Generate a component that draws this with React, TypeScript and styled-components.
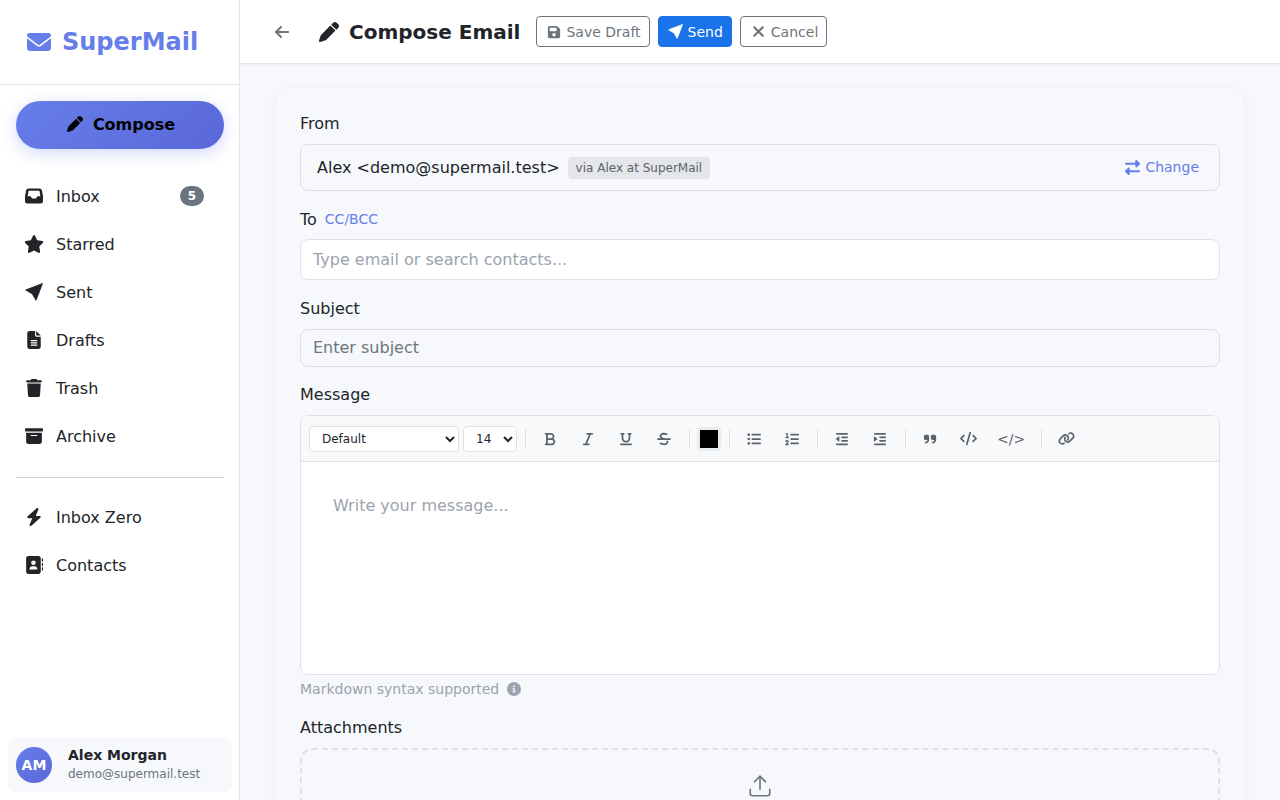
import React from 'react'
import styled, { createGlobalStyle } from 'styled-components'
import {
  FaAddressBook, FaArrowLeft, FaBold, FaBolt, FaBoxArchive, FaCircleInfo, FaCode, FaEnvelope,
  FaFileLines, FaFloppyDisk, FaIndent, FaItalic, FaLink, FaListOl, FaListUl, FaOutdent,
  FaPen, FaQuoteRight, FaRightLeft, FaStar, FaStrikethrough, FaTrash, FaUnderline, FaXmark,
} from 'react-icons/fa6'
import { Upload } from 'lucide-react'

const GlobalStyles = createGlobalStyle`
  html, body, #root {
    margin: 0;
    height: 100%;
    overflow: hidden;
  }
  body {
    font-family: "DejaVu Sans", sans-serif;
    color: #212529;
    background: #f6f8fc;
  }
  * { box-sizing: border-box; }
`

const AppContainer = styled.div`
  display: flex;
  width: 1280px;
  height: 800px;
`

const Sidebar = styled.aside`
  width: 240px;
  flex-shrink: 0;
  display: flex;
  flex-direction: column;
  background: #fff;
  box-shadow: inset -1px 0 0 #e3e5e8;
`

const Brand = styled.div`
  height: 85px;
  display: flex;
  align-items: center;
  gap: 11px;
  padding-left: 27px;
  border-bottom: 1px solid #e3e5e8;
  color: #667eea;
  font-size: 24px;
  font-weight: 700;
`

const ComposeButton = styled.button`
  margin: 16px 16px 23px;
  height: 48px;
  display: flex;
  align-items: center;
  justify-content: center;
  gap: 10px;
  padding: 0 0 2px 2px;
  border: 0;
  border-radius: 24px;
  background: linear-gradient(135deg, #667eea, #5a67d8);
  box-shadow: 0 4px 15px rgba(102, 126, 234, 0.3);
  color: #000;
  font-family: inherit;
  font-size: 16px;
  font-weight: 700;
`

const NavList = styled.nav`
  display: flex;
  flex-direction: column;
  padding: 0 8px;
`

const NavItem = styled.div`
  height: 48px;
  display: flex;
  align-items: center;
  gap: 12px;
  padding: 0 28px 0 16px;
  font-size: 16px;
  color: #212529;
`

const NavIcon = styled.span`
  width: 20px;
  display: flex;
  justify-content: center;
  font-size: 18px;
`

const Badge = styled.span`
  margin-left: auto;
  min-width: 24px;
  height: 20px;
  display: flex;
  align-items: center;
  justify-content: center;
  border-radius: 10px;
  background: #6c757d;
  color: #fff;
  font-size: 12px;
  font-weight: 700;
`

const NavDivider = styled.hr`
  margin: 17px 16px 15px;
  border: 0;
  border-top: 1px solid #cfd2d5;
`

const UserCard = styled.div`
  margin: auto 8px 8px;
  height: 54px;
  display: flex;
  align-items: center;
  gap: 16px;
  padding: 0 8px;
  border-radius: 8px;
  background: #f7f8fc;
`

const Avatar = styled.div`
  width: 36px;
  height: 36px;
  display: flex;
  align-items: center;
  justify-content: center;
  border-radius: 50%;
  background: linear-gradient(135deg, #667eea, #5a67d8);
  color: #fff;
  font-size: 14px;
  font-weight: 700;
`

const UserName = styled.div`
  font-size: 14px;
  font-weight: 700;
  line-height: 19px;
`

const UserEmail = styled.div`
  font-size: 12px;
  line-height: 19px;
  color: #6c757d;
`

const Main = styled.main`
  flex: 1;
  min-width: 0;
  display: flex;
  flex-direction: column;
`

const TopBar = styled.header`
  height: 64px;
  flex-shrink: 0;
  display: flex;
  align-items: center;
  padding: 0 34px;
  background: #fff;
  border-bottom: 1px solid #e3e5e8;
  box-shadow: 0 1px 3px rgba(0, 0, 0, 0.05);
`

const BackButton = styled.span`
  display: flex;
  margin-right: 29px;
  color: #6c757d;
`

const Title = styled.h1`
  margin: 0 16px 0 0;
  display: flex;
  align-items: center;
  gap: 10px;
  font-size: 20px;
  line-height: 24px;
  font-weight: 700;
  color: #212529;
`

const ActionButton = styled.button<{ $primary?: boolean }>`
  height: 31px;
  margin-right: 8px;
  display: flex;
  align-items: center;
  gap: 3.5px;
  padding: 0 8px;
  border: 1px solid ${p => (p.$primary ? '#1a73e8' : '#6c757d')};
  border-radius: 4px;
  background: ${p => (p.$primary ? '#1a73e8' : 'transparent')};
  color: ${p => (p.$primary ? '#fff' : '#6c757d')};
  font-family: inherit;
  font-size: 14px;
`

const ButtonIcon = styled.span<{ $width?: number }>`
  width: ${p => p.$width ?? 17.5}px;
  display: flex;
  justify-content: center;
`

const Content = styled.div`
  flex: 1;
  min-height: 0;
  overflow: hidden;
  padding: 24px 36px;
`

const Card = styled.section`
  padding: 24px;
  border-radius: 16px;
  background: #f6f8fc;
  box-shadow: 0 2px 12px rgba(0, 0, 0, 0.05);
`

const FieldLabel = styled.label`
  display: block;
  margin-bottom: 8px;
  font-size: 16px;
  line-height: 24px;
  color: #212529;
`

const ToLabelRow = styled.div`
  display: flex;
  align-items: center;
  gap: 8px;
  margin: 16px 0 8px;
  height: 24px;
  font-size: 16px;
`

const CcLink = styled.span`
  color: #667eea;
  font-size: 14px;
`

const FromBox = styled.div`
  height: 47px;
  display: flex;
  align-items: center;
  padding: 0 20px 0 16px;
  border: 1px solid #dee2e6;
  border-radius: 8px;
  font-size: 16px;
`

const ViaTag = styled.span`
  margin-left: 8px;
  padding: 0 8px;
  height: 22px;
  display: flex;
  align-items: center;
  border-radius: 4px;
  background: #e4e6e9;
  color: #5c636a;
  font-size: 12px;
`

const ChangeLink = styled.span`
  margin-left: auto;
  display: flex;
  align-items: center;
  gap: 5px;
  padding-bottom: 1px;
  color: #667eea;
  font-size: 14px;
`

const TextInput = styled.input<{ $plain?: boolean }>`
  display: block;
  width: 100%;
  height: ${p => (p.$plain ? '38px' : '41px')};
  margin-bottom: ${p => (p.$plain ? '16px' : '17px')};
  padding: ${p => (p.$plain ? '0 12px 2px' : '0 12px')};
  border: 1px solid #dee2e6;
  border-radius: 8px;
  background: ${p => (p.$plain ? 'transparent' : '#fff')};
  font-family: inherit;
  font-size: 16px;
  outline: none;
  &::placeholder {
    color: ${p => (p.$plain ? '#6c757d' : '#9ca3af')};
    opacity: 1;
  }
`

const Editor = styled.div`
  height: 260px;
  display: flex;
  flex-direction: column;
  border: 1px solid #dee2e6;
  border-radius: 8px;
  overflow: hidden;
`

const Toolbar = styled.div`
  height: 46px;
  flex-shrink: 0;
  display: flex;
  align-items: center;
  padding: 0 8px;
  border-bottom: 1px solid #dee2e6;
  background: #f8f9fa;
`

const FontSelect = styled.select<{ $width: number }>`
  width: ${p => p.$width}px;
  height: 26px;
  margin-right: 4px;
  padding: 0 8px;
  border: 1px solid #dee2e6;
  border-radius: 4px;
  background-color: #fff;
  color: #212529;
  font-family: inherit;
  font-size: 12px;
  & + & {
    margin-right: 2px;
  }
`

const ToolDivider = styled.span`
  width: 1px;
  height: 20px;
  margin: 0 5px 0 6px;
  background: #dee2e6;
`

const ToolButton = styled.button`
  min-width: 34px;
  height: 28px;
  margin: 0 2px;
  padding: 0 8px;
  display: flex;
  align-items: center;
  justify-content: center;
  border: 0;
  background: transparent;
  color: #5c636a;
  font-family: inherit;
  font-size: 14px;
`

const ColorInput = styled.input`
  width: 24px;
  height: 24px;
  margin: 0 2px;
  padding: 0;
  border: 0;
  border-radius: 4px;
  background: #e9ecef;
  &::-webkit-color-swatch-wrapper {
    padding: 3px;
  }
  &::-webkit-color-swatch {
    border: 0;
  }
`

const MessageArea = styled.div`
  flex: 1;
  padding: 32px;
  background: #fff;
  color: #9ca3af;
  font-size: 16px;
  line-height: 24px;
`

const HelpText = styled.div`
  display: flex;
  align-items: center;
  gap: 8px;
  margin-top: 4px;
  height: 20px;
  color: #9ca3af;
  font-size: 14px;
`

const AttachLabel = styled(FieldLabel)`
  margin-top: 17px;
  margin-bottom: 8px;
`

const DropZone = styled.div`
  height: 140px;
  display: flex;
  flex-direction: column;
  align-items: center;
  padding-top: 23px;
  border: 2px dashed #dee2e6;
  border-radius: 12px;
  color: #6c757d;
`

const InboxIcon = () => (
  <svg width="18" height="16" viewBox="0 0 18 16" fill="currentColor">
    <path
      fillRule="evenodd"
      d="M3.4.5h11.2a2.4 2.4 0 0 1 2.3 1.8L18 8v5a2.5 2.5 0 0 1-2.5 2.5h-13A2.5 2.5 0 0 1 0 13V8l1.1-5.7A2.4 2.4 0 0 1 3.4.5ZM3.6 2.7h10.8l1 5.5h-3l-1.4 2.2H7L5.6 8.2h-3Z"
    />
  </svg>
)

const SendIcon = ({ size }: { size: number }) => (
  <svg
    width={size}
    height={size}
    viewBox="0 0 16 16"
    fill="currentColor"
    stroke="currentColor"
    strokeWidth="0.8"
    strokeLinejoin="round"
  >
    <path d="M15.5.5 9.8 15.4 6.4 9.6.6 6.2Z" />
  </svg>
)

const navMain = [
  { icon: <InboxIcon />, label: 'Inbox', badge: 5 },
  { icon: <FaStar size={20} />, label: 'Starred' },
  { icon: <SendIcon size={18} />, label: 'Sent' },
  { icon: <FaFileLines />, label: 'Drafts' },
  { icon: <FaTrash />, label: 'Trash' },
  { icon: <FaBoxArchive />, label: 'Archive' },
]

const navExtra = [
  { icon: <FaBolt />, label: 'Inbox Zero' },
  { icon: <FaAddressBook />, label: 'Contacts' },
]

const App = () => {
  return (
    <AppContainer>
      <GlobalStyles />
      <Sidebar>
        <Brand><FaEnvelope size={24} />SuperMail</Brand>
        <ComposeButton><FaPen size={16} />Compose</ComposeButton>
        <NavList>
          {navMain.map(item => (
            <NavItem key={item.label}>
              <NavIcon>{item.icon}</NavIcon>
              {item.label}
              {item.badge && <Badge>{item.badge}</Badge>}
            </NavItem>
          ))}
        </NavList>
        <NavDivider />
        <NavList>
          {navExtra.map(item => (
            <NavItem key={item.label}>
              <NavIcon>{item.icon}</NavIcon>
              {item.label}
            </NavItem>
          ))}
        </NavList>
        <UserCard>
          <Avatar>AM</Avatar>
          <div>
            <UserName>Alex Morgan</UserName>
            <UserEmail>demo@supermail.test</UserEmail>
          </div>
        </UserCard>
      </Sidebar>
      <Main>
        <TopBar>
          <BackButton><FaArrowLeft size={16} /></BackButton>
          <Title><FaPen size={20} />Compose Email</Title>
          <ActionButton><ButtonIcon><FaFloppyDisk size={14} /></ButtonIcon>Save Draft</ActionButton>
          <ActionButton $primary><ButtonIcon><SendIcon size={15} /></ButtonIcon>Send</ActionButton>
          <ActionButton><ButtonIcon $width={18.5}><FaXmark size={17} /></ButtonIcon>Cancel</ActionButton>
        </TopBar>
        <Content>
          <Card>
            <FieldLabel>From</FieldLabel>
            <FromBox>
              Alex &lt;demo@supermail.test&gt;
              <ViaTag>via Alex at SuperMail</ViaTag>
              <ChangeLink><FaRightLeft size={15} />Change</ChangeLink>
            </FromBox>
            <ToLabelRow>To <CcLink>CC/BCC</CcLink></ToLabelRow>
            <TextInput placeholder="Type email or search contacts..." />
            <FieldLabel>Subject</FieldLabel>
            <TextInput $plain placeholder="Enter subject" />
            <FieldLabel>Message</FieldLabel>
            <Editor>
              <Toolbar>
                <FontSelect $width={150} defaultValue="Default"><option>Default</option></FontSelect>
                <FontSelect $width={54} defaultValue="14"><option>14</option></FontSelect>
                <ToolDivider />
                <ToolButton><FaBold size={14} /></ToolButton>
                <ToolButton><FaItalic size={14} /></ToolButton>
                <ToolButton><FaUnderline size={14} /></ToolButton>
                <ToolButton><FaStrikethrough size={14} /></ToolButton>
                <ToolDivider />
                <ColorInput type="color" defaultValue="#000000" />
                <ToolDivider />
                <ToolButton><FaListUl size={14} /></ToolButton>
                <ToolButton><FaListOl size={14} /></ToolButton>
                <ToolDivider />
                <ToolButton><FaOutdent size={14} /></ToolButton>
                <ToolButton><FaIndent size={14} /></ToolButton>
                <ToolDivider />
                <ToolButton><FaQuoteRight size={14} /></ToolButton>
                <ToolButton><FaCode size={17} /></ToolButton>
                <ToolButton>&lt;/&gt;</ToolButton>
                <ToolDivider />
                <ToolButton><FaLink size={17} /></ToolButton>
              </Toolbar>
              <MessageArea>Write your message...</MessageArea>
            </Editor>
            <HelpText>Markdown syntax supported <FaCircleInfo size={14} /></HelpText>
            <AttachLabel>Attachments</AttachLabel>
            <DropZone><Upload size={26} strokeWidth={1.5} /></DropZone>
          </Card>
        </Content>
      </Main>
    </AppContainer>
  )
}

export default App
